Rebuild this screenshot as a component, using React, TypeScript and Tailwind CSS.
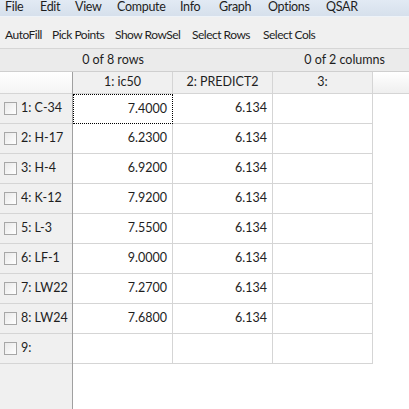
import React from 'react';

const menus = [
    { label: 'File', w: 'w-[35px]' },
    { label: 'Edit', w: 'w-[35px]' },
    { label: 'View', w: 'w-[42px]' },
    { label: 'Compute', w: 'w-[63px]' },
    { label: 'Info', w: 'w-[39px]' },
    { label: 'Graph', w: 'w-[49px]' },
    { label: 'Options', w: 'w-[58px]' },
    { label: 'QSAR', w: 'w-[50px]' },
];

const tools = [
    { label: 'AutoFill', w: 'w-[47px]' },
    { label: 'Pick Points', w: 'w-[63px]' },
    { label: 'Show RowSel', w: 'w-[77px]' },
    { label: 'Select Rows', w: 'w-[71px]' },
    { label: 'Select Cols', w: 'w-[60px]' },
];

const rows = [
    { name: '1: C-34', ic50: '7.4000', pred: '6.134' },
    { name: '2: H-17', ic50: '6.2300', pred: '6.134' },
    { name: '3: H-4', ic50: '6.9200', pred: '6.134' },
    { name: '4: K-12', ic50: '7.9200', pred: '6.134' },
    { name: '5: L-3', ic50: '7.5500', pred: '6.134' },
    { name: '6: LF-1', ic50: '9.0000', pred: '6.134' },
    { name: '7: LW22', ic50: '7.2700', pred: '6.134' },
    { name: '8: LW24', ic50: '7.6800', pred: '6.134' },
    { name: '9:', ic50: '', pred: '' },
];

export default function App() {
    return (
        <div
            className="w-[409px] h-[409px] overflow-hidden flex flex-col bg-white text-[12.5px] text-[#1e1e1e]"
            style={{ fontFamily: 'Lato, "Noto Sans", sans-serif' }}
        >
            {/* menu bar */}
            <div className="h-[17px] flex pl-[5px] bg-gradient-to-b from-[#e2eaf4] to-[#d6e0ec] border-b border-[#eef3f8] leading-[14px] tracking-[-0.3px]">
                {menus.map((m) => (
                    <span key={m.label} className={`${m.w} shrink-0 whitespace-nowrap`}>
                        {m.label}
                    </span>
                ))}
            </div>

            {/* toolbar */}
            <div className="h-[32px] flex items-center pl-[5px] pt-[4px] bg-[#f0f0f0] border-b border-[#d6d6d6] text-[12px] tracking-[-0.5px]">
                {tools.map((t) => (
                    <span key={t.label} className={`${t.w} shrink-0 whitespace-nowrap`}>
                        {t.label}
                    </span>
                ))}
            </div>

            {/* selection status */}
            <div className="h-[23px] flex items-center bg-[#ebebeb] border-b border-[#cfcfcf]">
                <span className="w-[226px] text-center">0 of 8 rows</span>
                <span className="flex-1 text-right pr-[24px]">0 of 2 columns</span>
            </div>

            {/* grid */}
            <div className="flex-1 flex">
                <div className="w-[73px] bg-[#f0f0f0] border-r border-[#a0a0a0] flex flex-col">
                    <div className="h-[22px] bg-gradient-to-b from-white to-[#f4f4f4] border-b border-[#d5d5d5]" />
                    {rows.map((r) => (
                        <div key={r.name} className="h-[30px] flex items-center gap-[4px] pl-[4px] border-b border-[#d5d5d5]">
                            <span className="w-[13px] h-[13px] border border-[#a7a7a7] bg-gradient-to-br from-[#e9e9e9] to-white" />
                            <span>{r.name}</span>
                        </div>
                    ))}
                </div>
                <div className="flex-1 flex flex-col">
                    <div className="h-[22px] flex border-b border-[#d5d5d5]">
                        {['1: ic50', '2: PREDICT2', '3:'].map((h) => (
                            <div key={h} className="w-[100px] flex items-center justify-center bg-[#f0f0f0] border-r border-[#d5d5d5]">
                                {h}
                            </div>
                        ))}
                        <div className="flex-1 bg-gradient-to-b from-white to-[#efefef]" />
                    </div>
                    {rows.map((r, i) => (
                        <div key={r.name} className="h-[30px] flex">
                            <div
                                className={
                                    i === 0
                                        ? 'w-[100px] flex items-center justify-end pr-[5px] border border-dotted border-black'
                                        : 'w-[100px] flex items-center justify-end pr-[5px] border-r border-b border-[#d5d5d5]'
                                }
                            >
                                {r.ic50}
                            </div>
                            <div className="w-[100px] flex items-center justify-end pr-[5px] border-r border-b border-[#d5d5d5]">
                                {r.pred}
                            </div>
                            <div className="w-[100px] border-r border-b border-[#d5d5d5]" />
                        </div>
                    ))}
                </div>
            </div>
        </div>
    );
}
